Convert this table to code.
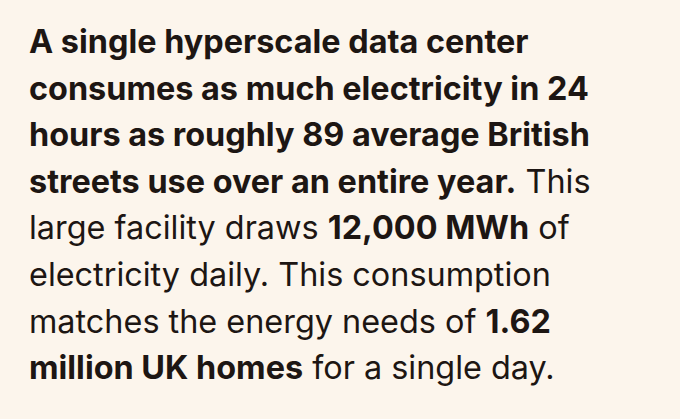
export default function App() {
  const B = ({ children }) => <span className="font-bold">{children}</span>;
  return (
    <div className="w-[680px] h-[419px] bg-[#fcf5ec] overflow-hidden">
      <p
        className="pl-[29px] pt-[19px] text-[32.4px] leading-[46.6px] text-[#1d1613] whitespace-nowrap"
        style={{ fontFamily: "Inter, 'Noto Sans', sans-serif" }}
      >
        <B>
          A single hyperscale data center
          <br />
          consumes as much electricity in 24
          <br />
          hours as roughly 89 average British
          <br />
          streets use over an entire year.
        </B>{" "}
        This
        <br />
        large facility draws <B>12,000 MWh</B> of
        <br />
        electricity daily. This consumption
        <br />
        matches the energy needs of <B>1.62</B>
        <br />
        <B>million UK homes</B> for a single day.
      </p>
    </div>
  );
}
